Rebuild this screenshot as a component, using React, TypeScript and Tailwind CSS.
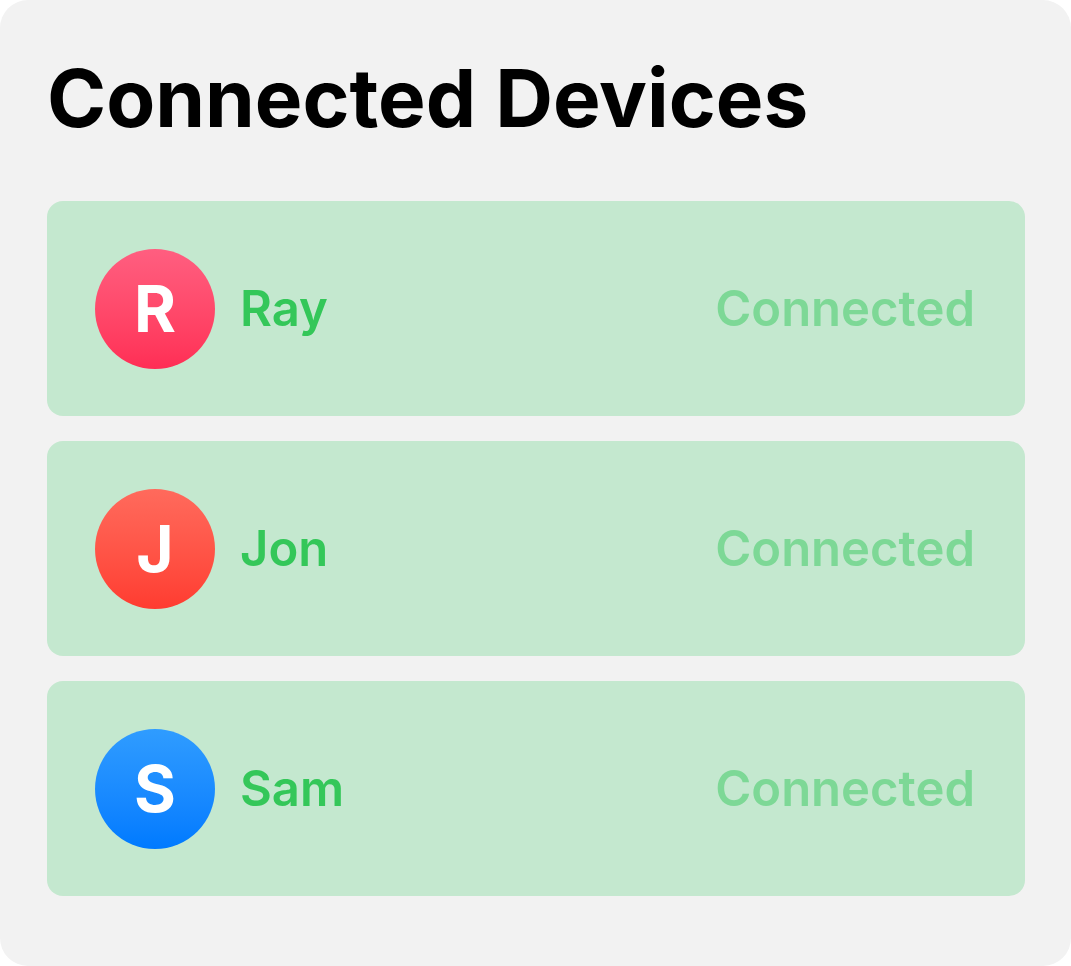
import React from "react";

const devices = [
  { name: "Ray", letter: "R", grad: "bg-gradient-to-b from-[#ff5e80] to-[#ff2d55]" },
  { name: "Jon", letter: "J", grad: "bg-gradient-to-b from-[#ff6a5c] to-[#ff3b30]" },
  { name: "Sam", letter: "S", grad: "bg-gradient-to-b from-[#2f9cff] to-[#007aff]" },
];

export default function App() {
  return (
    <div className="w-[1071px] h-[966px] bg-white" style={{ fontFamily: "Inter, 'Noto Sans', sans-serif" }}>
      <div className="w-full h-full bg-[#f2f2f2] rounded-[28px] pl-[47px] pr-[46px] pt-[54px]">
        <h1 className="text-[80px] leading-[88px] font-bold text-black">Connected Devices</h1>
        <div className="mt-[59px] flex flex-col gap-[25px]">
          {devices.map((d) => (
            <div key={d.name} className="h-[215px] bg-[#c4e8cf] rounded-[16px] flex items-center pl-[48px] pr-[50px]">
              <div className={`w-[120px] h-[120px] rounded-full ${d.grad} flex items-center justify-center text-white text-[64px] font-bold`}>
                {d.letter}
              </div>
              <div className="ml-[25px] text-[49px] font-semibold text-[#34c759]">{d.name}</div>
              <div className="ml-auto text-[49px] font-semibold text-[#7dd896]">Connected</div>
            </div>
          ))}
        </div>
      </div>
    </div>
  );
}
